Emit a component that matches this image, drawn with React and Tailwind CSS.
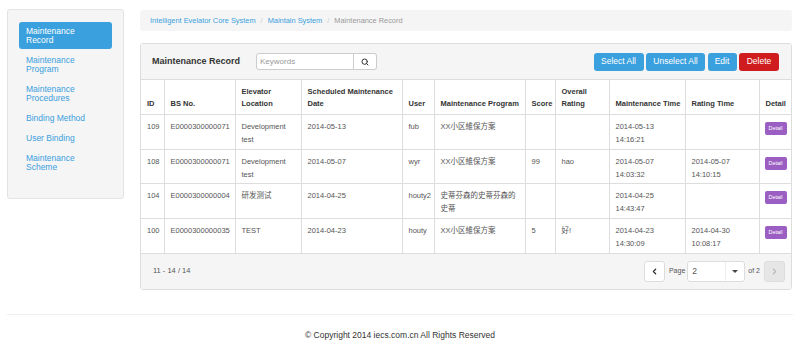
import { ChevronLeft, ChevronRight, Search } from "lucide-react";

const menu = [
  ["Maintenance", "Record"],
  ["Maintenance", "Program"],
  ["Maintenance", "Procedures"],
  ["Binding Method"],
  ["User Binding"],
  ["Maintenance", "Scheme"],
];

const rows = [
  { id: 109, bs: "E0000300000071", loc: "Development test", date: "2014-05-13", user: "fub", prog: "XX小区維保方案", score: "", rating: "", mtime: ["2014-05-13", "14:16:21"], rtime: null, h: "h-[35px]" },
  { id: 108, bs: "E0000300000071", loc: "Development test", date: "2014-05-07", user: "wyr", prog: "XX小区維保方案", score: "99", rating: "hao", mtime: ["2014-05-07", "14:03:32"], rtime: ["2014-05-07", "14:10:15"], h: "h-[34px]" },
  { id: 104, bs: "E0000300000004", loc: "研发测试", date: "2014-04-25", user: "houty2", prog: "史蒂芬森的史蒂芬森的史蒂", score: "", rating: "", mtime: ["2014-04-25", "14:43:47"], rtime: null, h: "h-[35px]" },
  { id: 100, bs: "E0000300000035", loc: "TEST", date: "2014-04-23", user: "houty", prog: "XX小区維保方案", score: "5", rating: "好!", mtime: ["2014-04-23", "14:30:09"], rtime: ["2014-04-30", "10:08:17"], h: "h-[35px]" },
];

const heads = [
  ["ID"],
  ["BS No."],
  ["Elevator", "Location"],
  ["Scheduled Maintenance", "Date"],
  ["User"],
  ["Maintenance Program"],
  ["Score"],
  ["Overall", "Rating"],
  ["Maintenance Time"],
  ["Rating Time"],
  ["Detail"],
];

const cols = ["w-[23px]", "w-[71px]", "w-[66px]", "w-[101px]", "w-[32px]", "w-[91px]", "w-[30px]", "w-[54px]", "w-[76px]", "w-[74px]", "w-[34px]"];

function Lines({ v }) {
  if (!v) return null;
  return (
    <>
      {v[0]}
      <br />
      {v[1]}
    </>
  );
}

export default function App() {
  return (
    <div className="w-[800px] h-[349px] bg-white text-[#555] font-['Liberation_Sans','Noto_Sans_CJK_SC',sans-serif] overflow-hidden">
      <div className="flex gap-[16px] pl-[7px] pr-[8px] pt-[9px]">
        <aside className="w-[117px] h-[190px] shrink-0 bg-[#f5f5f5] border border-[#e3e3e3] rounded-[3px] px-[11px] pt-[12px]">
          <ul className="flex flex-col gap-[2px]">
            {menu.map((m, i) => (
              <li
                key={i}
                className={`px-[7px] py-[4.5px] rounded-[3px] text-[8.5px] leading-[9px] ${
                  i === 0 ? "bg-[#3aa0de] text-white" : "text-[#3aa0de]"
                }`}
              >
                {m[0]}
                {m[1] && (
                  <>
                    <br />
                    {m[1]}
                  </>
                )}
              </li>
            ))}
          </ul>
        </aside>

        <main className="flex-1 min-w-0">
          <div className="mt-[1px] h-[21px] bg-[#f5f5f5] rounded-[3px] flex items-center px-[10px] text-[7.4px] gap-[5px]">
            <span className="text-[#3aa0de]">Intelligent Evelator Core System</span>
            <span className="text-[#ccc]">/</span>
            <span className="text-[#3aa0de]">Maintain System</span>
            <span className="text-[#ccc]">/</span>
            <span className="text-[#999]">Maintenance Record</span>
          </div>

          <div className="mt-[12px] border border-[#ddd] rounded-[3px] overflow-hidden">
            <div className="h-[36px] bg-[#f5f5f5] border-b border-[#ddd] flex items-center pl-[11px] pr-[12px]">
              <span className="text-[9px] font-bold text-[#333]">Maintenance Record</span>
              <div className="ml-[16px] flex h-[17px]">
                <div className="w-[98px] bg-white border border-[#ccc] rounded-l-[3px] flex items-center px-[3px] text-[8px] text-[#999]">
                  Keywords
                </div>
                <div className="w-[23px] bg-white border border-l-0 border-[#ccc] rounded-r-[3px] flex items-center justify-center text-[#333]">
                  <Search size={8} strokeWidth={3} />
                </div>
              </div>
              <div className="ml-auto flex gap-[2.5px] text-[8.5px] text-white">
                <button className="w-[50px] h-[18px] bg-[#3aa0de] rounded-[3px]">Select All</button>
                <button className="w-[59px] h-[18px] bg-[#3aa0de] rounded-[3px]">Unselect All</button>
                <button className="w-[29px] h-[18px] bg-[#3aa0de] rounded-[3px]">Edit</button>
                <button className="w-[40px] h-[18px] bg-[#cf1d1f] rounded-[3px]">Delete</button>
              </div>
            </div>

            <table className="w-full table-fixed border-collapse text-[7.5px]">
              <colgroup>
                {cols.map((c, i) => (
                  <col key={i} className={c} />
                ))}
              </colgroup>
              <thead>
                <tr className="h-[34px] border-b border-[#ddd]">
                  {heads.map((h, i) => (
                    <th
                      key={i}
                      className={`px-[6px] pb-[4px] align-bottom text-left font-bold text-[#333] leading-[12px] whitespace-nowrap ${
                        i > 0 ? "border-l border-[#ddd]" : ""
                      }`}
                    >
                      {h[0]}
                      {h[1] && (
                        <>
                          <br />
                          {h[1]}
                        </>
                      )}
                    </th>
                  ))}
                </tr>
              </thead>
              <tbody>
                {rows.map((r) => (
                  <tr key={r.id} className={`${r.h} border-b border-[#ddd] align-top leading-[13px]`}>
                    <td className="px-[6px] pt-[5px]">{r.id}</td>
                    <td className="px-[6px] pt-[5px] border-l border-[#ddd]">{r.bs}</td>
                    <td className="px-[6px] pt-[5px] border-l border-[#ddd]">{r.loc}</td>
                    <td className="px-[6px] pt-[5px] border-l border-[#ddd]">{r.date}</td>
                    <td className="px-[6px] pt-[5px] border-l border-[#ddd]">{r.user}</td>
                    <td className="px-[6px] pt-[5px] border-l border-[#ddd]">{r.prog}</td>
                    <td className="px-[6px] pt-[5px] border-l border-[#ddd]">{r.score}</td>
                    <td className="px-[6px] pt-[5px] border-l border-[#ddd]">{r.rating}</td>
                    <td className="px-[6px] pt-[5px] border-l border-[#ddd]">
                      <Lines v={r.mtime} />
                    </td>
                    <td className="px-[6px] pt-[5px] border-l border-[#ddd]">
                      <Lines v={r.rtime} />
                    </td>
                    <td className="pl-[5px] pt-[6px] border-l border-[#ddd]">
                      <span className="inline-flex items-center justify-center w-[22px] h-[13px] bg-[#9b5ec2] text-white text-[5.5px] rounded-[2px]">
                        Detail
                      </span>
                    </td>
                  </tr>
                ))}
              </tbody>
            </table>

            <div className="h-[35px] bg-[#f5f5f5] flex items-center pl-[12px] pr-[6px] text-[7.5px]">
              <span className="text-[#555]">11 - 14 / 14</span>
              <div className="ml-auto flex items-center h-[21px]">
                <div className="w-[21px] h-[21px] bg-white border border-[#ddd] rounded-[3px] flex items-center justify-center text-[#333]">
                  <ChevronLeft size={9} strokeWidth={3.5} />
                </div>
                <span className="ml-[4px] text-[7px]">Page</span>
                <div className="ml-[2px] w-[58px] h-[21px] bg-white border border-[#ddd] rounded-[3px] flex items-center">
                  <span className="flex-1 pl-[4px] text-[8.5px] text-[#555]">2</span>
                  <div className="w-[19px] h-full border-l border-[#eee] flex items-center justify-center">
                    <span className="w-0 h-0 border-l-[3px] border-r-[3px] border-t-[3.5px] border-l-transparent border-r-transparent border-t-[#444]" />
                  </div>
                </div>
                <span className="ml-[3px] text-[7px]">of 2</span>
                <div className="ml-[4px] w-[21px] h-[21px] bg-[#e6e6e6] border border-[#ddd] rounded-[3px] flex items-center justify-center text-[#bbb]">
                  <ChevronRight size={9} strokeWidth={3.5} />
                </div>
              </div>
            </div>
          </div>
        </main>
      </div>

      <div className="mx-[7px] mt-[24px] border-t border-[#eee] pt-[14px] text-center text-[8.5px] text-[#333]">
        © Copyright 2014 iecs.com.cn All Rights Reserved
      </div>
    </div>
  );
}
